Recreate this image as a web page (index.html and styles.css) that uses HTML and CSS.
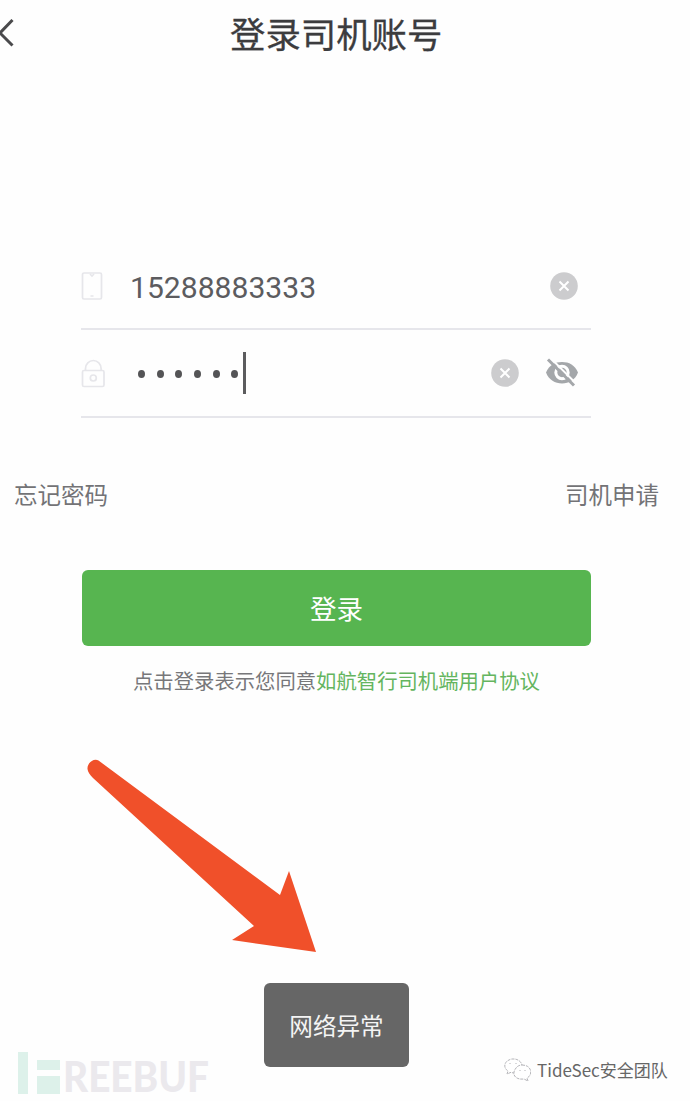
FILE: index.html
```html
<!DOCTYPE html>
<html lang="zh-CN">
<head>
<meta charset="utf-8">
<title>登录司机账号</title>
<link rel="stylesheet" href="styles.css">
</head>
<body>
<main class="screen">
  <header class="header">
    <svg class="back" width="16" height="30" viewBox="0 0 16 30"><path d="M12.5 1L0 14l12.500 12.500"/></svg>
    <h1 class="title">登录司机账号</h1>
  </header>
  <form class="form">
    <div class="field">
      <svg class="line-icon" width="24" height="30" viewBox="0 0 24 30"><rect x="1.500" y="2" width="19" height="26" rx="1.500"/><path d="M9 3l2 2 2-2M9.500 25h3"/></svg>
      <span class="phone">15288883333</span>
      <svg class="clear" width="28" height="28" viewBox="0 0 28 28"><circle cx="14" cy="14" r="13.800"/><path d="M9.500 9.500l9 9m0-9l-9 9"/></svg>
    </div>
    <div class="field field-password">
      <svg class="line-icon" width="24" height="30" viewBox="0 0 24 30"><path d="M4.500 13V10.500a7.800 8 0 0 1 15.600 0V13"/><rect x="1.500" y="12.500" width="21.500" height="16" rx="1.500"/><circle cx="12.300" cy="20" r="3"/></svg>
      <span class="dots"><i></i><i></i><i></i><i></i><i></i><i></i></span>
      <span class="caret"></span>
      <svg class="clear" width="28" height="28" viewBox="0 0 28 28"><circle cx="14" cy="14" r="13.800"/><path d="M9.500 9.500l9 9m0-9l-9 9"/></svg>
      <svg class="eye" width="32" height="28" viewBox="0 0 32 28"><path class="lid" d="M0 13.500C3 6 9 3 16 3s13 3 16 10.500c-3 7.500-9 11-16 11S3 21 0 13.500z"/><circle class="ring" cx="16" cy="13.500" r="6.200"/><path class="gap" d="M4-1.500l26 26"/><path class="slash" d="M2 .500l26 26"/></svg>
    </div>
  </form>
  <nav class="links"><a>忘记密码</a><a>司机申请</a></nav>
  <button class="login">登录</button>
  <p class="agreement">点击登录表示您同意<a>如航智行司机端用户协议</a></p>
  <div class="toast">网络异常</div>
  <svg class="arrow" width="230" height="194" viewBox="0 0 230 194"><path d="M11.500 1.500C7-1.500 0 4 .500 10c.3 3 2.500 6 5.500 9L167 167l-22 14 84 12-27-81-9 24z"/></svg>
  <svg class="freebuf" width="194" height="46" viewBox="0 0 194 46"><path d="M0 2h10v42H0zM19 10h23v10H19zM19 26h23v18H19z"/><text x="45" y="41.500" textLength="146" lengthAdjust="spacingAndGlyphs">REEBUF</text></svg>
  <div class="account">
    <svg class="wechat" width="28" height="24" viewBox="0 0 28 24"><path d="M12 15c-2 0-3-.3-4-.7L4 16l1-3C-1 9 2 2 9 1c5-.5 9 2 10 6"/><path d="M19 7c10 0 11 10 5 13l1 3-4-2c-7 1-11-3-10-7s4-7 8-7z"/><path d="M7 5v1M13 5v1M17 12v1M22 12v1"/></svg>
    <span>TideSec安全团队</span>
  </div>
</main>
</body>
</html>
```
FILE: styles.css
```css
* { box-sizing: border-box; }
body { margin: 0; background: #fefefe; font-family: Roboto, "Noto Sans CJK SC", sans-serif; }
.screen { position: relative; width: 690px; height: 1101px; overflow: hidden; display: flex; flex-direction: column; }
.header { display: flex; align-items: center; height: 68px; flex: none; }
.back { fill: none; stroke: #4a4a4c; stroke-width: 3; }
.title { margin: 0 0 0 214px; padding-top: 3px; font-size: 35.400px; font-weight: 400; line-height: 68px; color: #3c3c3e; -webkit-text-stroke: .3px #3c3c3e; }
.form { margin: 176px 99px 0 81px; flex: none; }
.field { display: flex; align-items: center; height: 86px; padding-right: 13px; border-bottom: 2px solid #e6e6eb; }
.field-password { height: 88px; }
.line-icon { fill: none; stroke: #e6e6ea; stroke-width: 1.700; }
.phone { margin-left: 25px; padding-top: 4px; font-size: 30.100px; line-height: 40px; color: #5c5c5f; }
.clear { margin-left: auto; fill: #ccccce; }
.clear path { stroke: #fff; stroke-width: 2; }
.dots { display: flex; gap: 11.700px; margin-left: 33px; padding-top: 1px; }
.dots i { width: 7px; height: 8px; border-radius: 50%; background: #545456; }
.caret { width: 3px; height: 42px; margin-left: 5px; background: #5c5c5e; }
.eye { margin-left: 27px; overflow: visible; }
.lid { fill: #a4a7aa; }
.ring { fill: #a4a7aa; stroke: #fff; stroke-width: 3; }
.gap { stroke: #fefefe; stroke-width: 2; }
.slash { stroke: #a4a7aa; stroke-width: 3; }
.links { display: flex; justify-content: space-between; margin: 62px 31px 0 14px; font-size: 23.500px; line-height: 32px; color: #737376; }
.login { margin: 58px 99px 0 82px; padding: 0 0 1px; height: 76px; flex: none; border: 0; border-radius: 6px; background: #57b550; color: #fff; font: 26.500px "Noto Sans CJK SC", sans-serif; }
.agreement { margin: 21px 0 0 133px; font-size: 20.350px; line-height: 30px; color: #77777a; white-space: nowrap; }
.agreement a { color: #64b55f; }
.toast { margin: 286px 0 0 264px; padding-top: 2px; width: 145px; height: 84px; flex: none; border-radius: 6px; background: #666; color: #f4f4f4; font-size: 23.600px; line-height: 84px; text-align: center; }
.arrow { position: absolute; left: 87px; top: 759px; overflow: visible; fill: #f0502a; }
.freebuf { position: absolute; left: 18px; top: 1050px; overflow: visible; fill: #ddf1ea; }
.freebuf text { font: 900 42px Lato, sans-serif; fill: #ebe9ed; }
.account { position: absolute; left: 503px; top: 1056px; display: flex; align-items: center; gap: 6px; font: 17.050px/28px "Noto Sans CJK SC", sans-serif; color: #666; white-space: nowrap; }
.wechat { fill: #fff; stroke: #b4b4b8; stroke-width: 1; stroke-dasharray: 3 1; }
```
